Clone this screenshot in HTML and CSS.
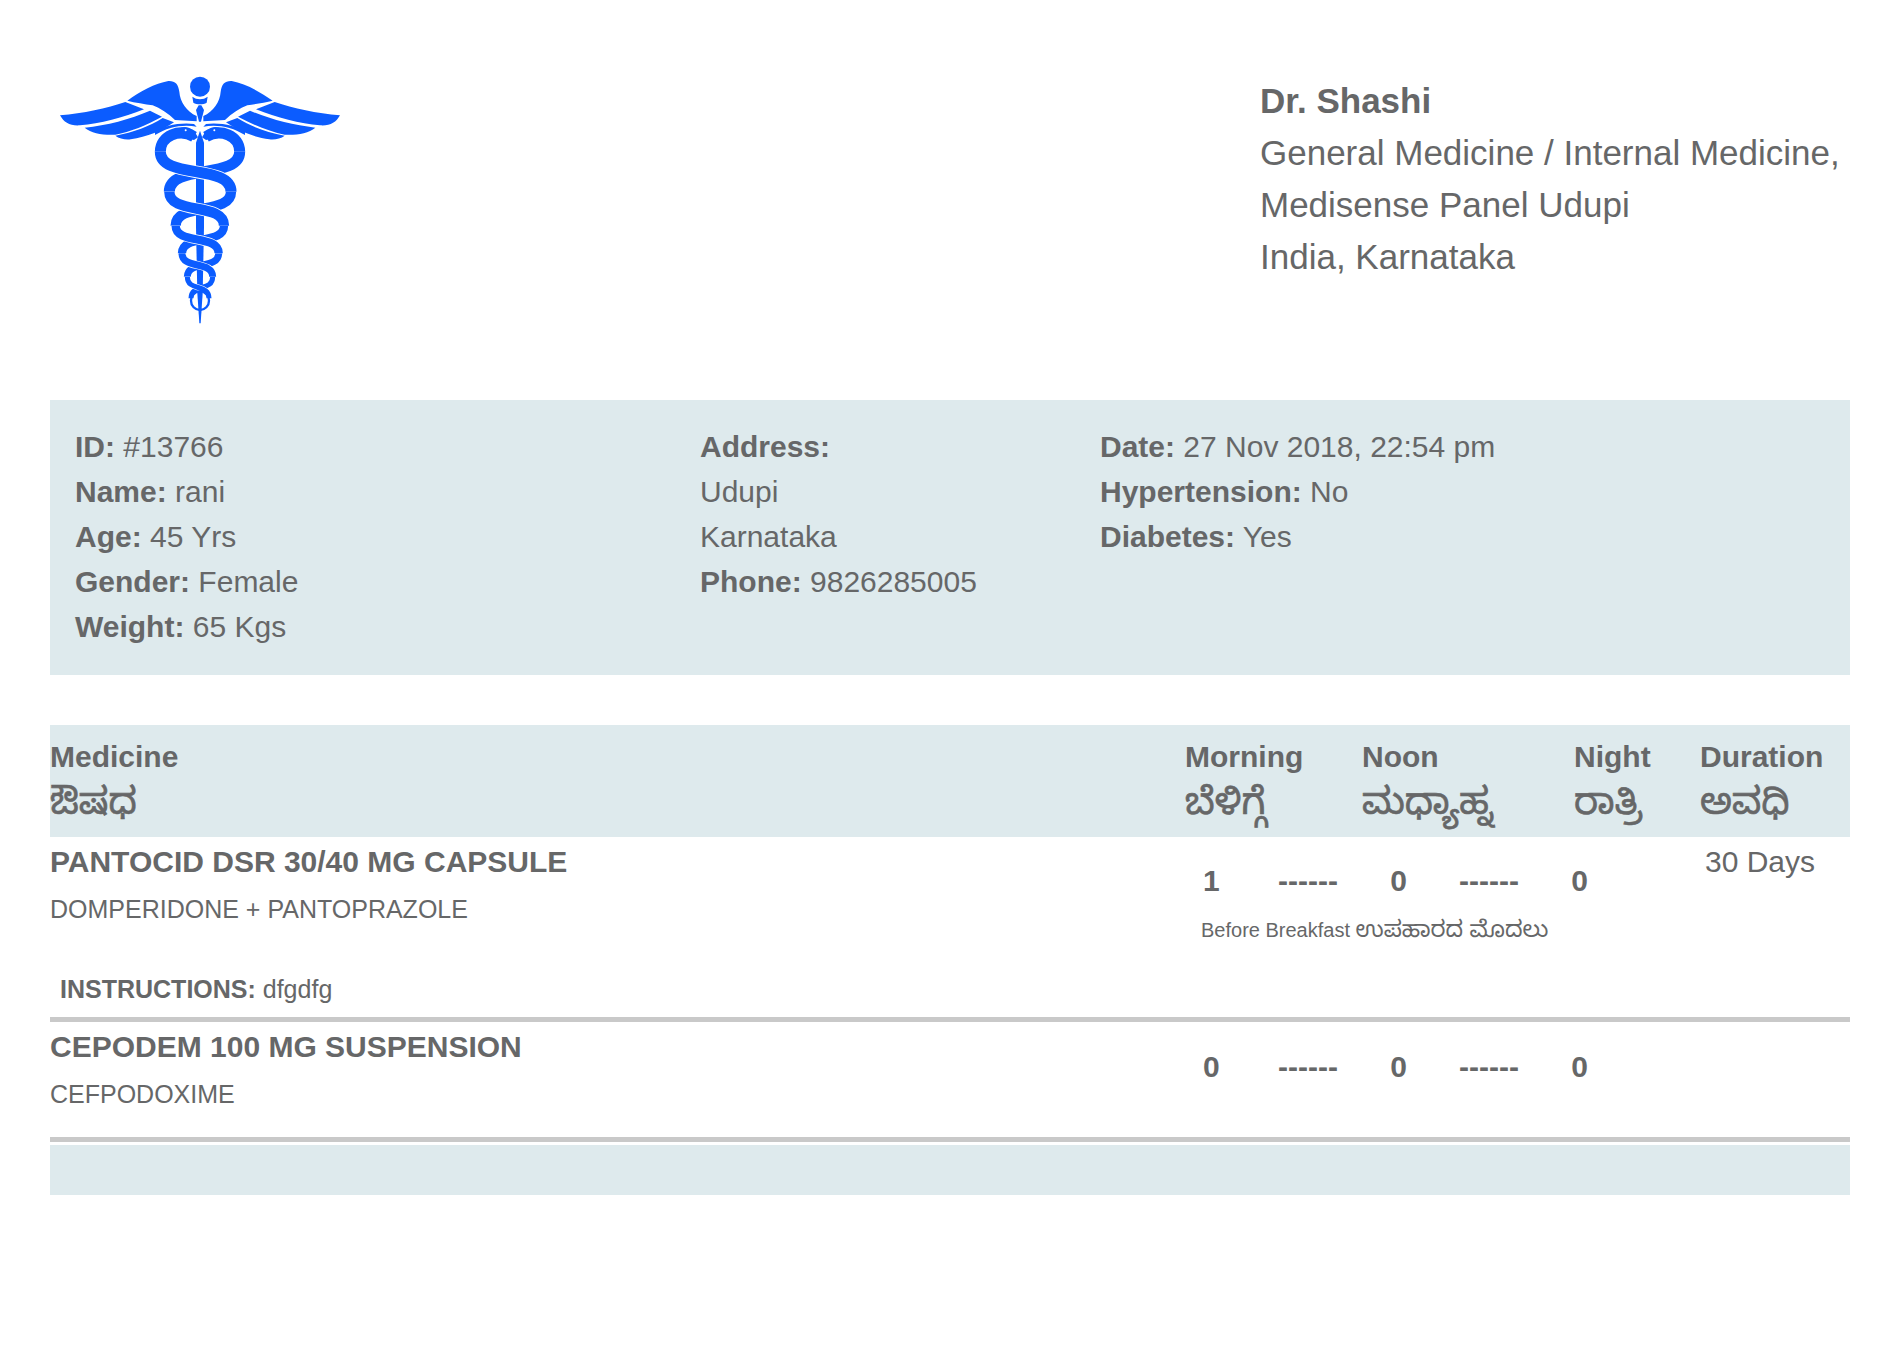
FILE: index.html
```html
<!DOCTYPE html>
<html lang="en">
<head>
<meta charset="utf-8">
<title>Prescription</title>
<link rel="stylesheet" href="styles.css">
</head>
<body>
<div class="sheet">
  <header class="top">
    <svg class="logo" viewBox="0 0 960 840" aria-hidden="true">
      <defs>
        <g id="wing">
          <path d="M60 166C130 160 200 145 256 126L312 148C250 172 180 192 120 196C90 198 72 188 60 166Z"/>
          <path d="M134 203C200 196 270 178 330 152L366 170C320 195 270 216 226 224C190 226 155 220 134 203Z"/>
          <path d="M226 227C280 218 330 198 368 174L402 187C370 210 320 232 272 238C255 240 238 236 226 227Z"/>
          <path d="M262 122C300 95 345 70 385 63C405 62 415 72 418 95C420 125 440 155 470 168V184L405 180C385 160 360 145 338 136C315 132 285 128 262 122Z"/>
          <path d="M345 215C370 198 420 186 462 192L470 200C430 192 385 200 345 225Z"/>
        </g>
      </defs>
      <g class="blue">
        <use href="#wing"/>
        <use href="#wing" transform="matrix(-1 0 0 1 960 0)"/>
        <circle cx="480" cy="80" r="30"/>
        <path d="M457 110C470 120 490 120 503 110L500 128C490 134 470 134 460 128Z"/>
        <path d="M468 150L476 136H484L492 150L483 185H477Z"/>
      </g>
      <g class="coil">
        <path class="c1" d="M599 275C599 359 388 311 388 395"/>
        <path class="c2" d="M573 395C573 466 407 426 407 497"/>
        <path class="c3" d="M552 497C552 555 426 522 426 580"/>
        <path class="c4" d="M536 580C536 629 442 601 442 650"/>
        <path class="c5" d="M518 650C518 696 453 669 453 715"/>
      </g>
      <path class="blue" d="M480 212L492 248V500L488 700L482 790H478L472 700L468 500V248Z"/>
      <g class="coil">
        <path class="case1" d="M361 275C361 359 573 311 573 395"/>
        <path class="c1" d="M361 275C361 359 573 311 573 395"/>
        <path class="case2" d="M388 395C388 466 552 426 552 497"/>
        <path class="c2" d="M388 395C388 466 552 426 552 497"/>
        <path class="case3" d="M407 497C407 555 536 522 536 580"/>
        <path class="c3" d="M407 497C407 555 536 522 536 580"/>
        <path class="case4" d="M426 580C426 629 518 601 518 650"/>
        <path class="c4" d="M426 580C426 629 518 601 518 650"/>
        <path class="case5" d="M442 650C442 696 507 669 507 715"/>
        <path class="c5" d="M442 650C442 696 507 669 507 715"/>
        <ellipse class="c6" cx="480" cy="722" rx="27" ry="28"/>
        <path class="c1" d="M361 275C361 225 420 205 462 230"/>
        <path class="c1" d="M599 275C599 225 540 205 498 230"/>
      </g>
      <g class="blue">
        <path d="M420 205C440 195 460 205 474 232L462 240L425 232Z"/>
        <path d="M540 205C520 195 500 205 486 232L498 240L535 232Z"/>
      </g>
      <circle class="eye" cx="437" cy="211" r="3"/>
      <circle class="eye" cx="523" cy="211" r="3"/>
    </svg>
    <address class="doctor">
      <strong>Dr. Shashi</strong><br>
      General Medicine / Internal Medicine,<br>
      Medisense Panel Udupi<br>
      India, Karnataka
    </address>
  </header>

  <section class="patient">
    <div class="pcol pcol-a">
      <div><b>ID:</b> #13766</div>
      <div><b>Name:</b> rani</div>
      <div><b>Age:</b> 45 Yrs</div>
      <div><b>Gender:</b> Female</div>
      <div><b>Weight:</b> 65 Kgs</div>
    </div>
    <div class="pcol pcol-b">
      <div><b>Address:</b></div>
      <div>Udupi</div>
      <div>Karnataka</div>
      <div><b>Phone:</b> 9826285005</div>
    </div>
    <div class="pcol">
      <div><b>Date:</b> 27 Nov 2018, 22:54 pm</div>
      <div><b>Hypertension:</b> No</div>
      <div><b>Diabetes:</b> Yes</div>
    </div>
  </section>

  <section class="rx">
    <div class="rx-head">
      <div>Medicine<br><span class="kn">ಔಷಧ</span></div>
      <div>Morning<br><span class="kn">ಬೆಳಿಗ್ಗೆ</span></div>
      <div>Noon<br><span class="kn">ಮಧ್ಯಾಹ್ನ</span></div>
      <div>Night<br><span class="kn">ರಾತ್ರಿ</span></div>
      <div>Duration<br><span class="kn">ಅವಧಿ</span></div>
    </div>

    <article class="rx-row rx-row-first">
      <div class="drug">
        <h3>PANTOCID DSR 30/40 MG CAPSULE</h3>
        <p>DOMPERIDONE + PANTOPRAZOLE</p>
      </div>
      <div class="dose-wrap">
        <div class="dose"><span>1</span><span>------</span><span>0</span><span>------</span><span>0</span></div>
        <p class="when">Before Breakfast <span class="kn-small">ಉಪಹಾರದ ಮೊದಲು</span></p>
      </div>
      <div class="days">30 Days</div>
      <p class="instr"><b>INSTRUCTIONS:</b> dfgdfg</p>
    </article>

    <article class="rx-row rx-row-second">
      <div class="drug">
        <h3>CEPODEM 100 MG SUSPENSION</h3>
        <p>CEFPODOXIME</p>
      </div>
      <div class="dose-wrap">
        <div class="dose"><span>0</span><span>------</span><span>0</span><span>------</span><span>0</span></div>
      </div>
      <div class="days"></div>
    </article>

    <div class="foot"></div>
  </section>
</div>
</body>
</html>
```
FILE: styles.css
```css
* { box-sizing: border-box; }
html, body { margin: 0; background: #fff; }
body {
  font-family: "Liberation Sans", "Noto Sans Kannada", "Noto Sans", sans-serif;
  color: #666768;
  font-size: 30px;
}
.sheet { width: 1800px; margin-left: 50px; }
b, strong { font-weight: 700; }

.top { display: flex; justify-content: space-between; height: 400px; }
.logo { width: 320px; height: 280px; margin: 60px 0 0 -10px; }
.blue { fill: #0b5cff; }
.coil { fill: none; stroke: #0b5cff; }
.c1 { stroke-width: 33px; }
.c2 { stroke-width: 31px; }
.c3 { stroke-width: 25px; }
.c4 { stroke-width: 21px; }
.c5 { stroke-width: 15px; }
.c6 { stroke-width: 7px; }
.case1, .case2, .case3, .case4, .case5 { stroke: #fff; }
.case1 { stroke-width: 38px; }
.case2 { stroke-width: 36px; }
.case3 { stroke-width: 29px; }
.case4 { stroke-width: 25px; }
.case5 { stroke-width: 18px; }
.eye { fill: #fff; }
.logo use { stroke: none; }

.doctor { font-style: normal; font-size: 35px; line-height: 52px; width: 590px; padding-top: 75px; white-space: nowrap; }

.patient { display: flex; height: 275px; background: #deeaed; padding: 24px 0 0 25px; line-height: 45px; font-size: 30px; }
.pcol-a { width: 625px; }
.pcol-b { width: 400px; }

.rx { margin-top: 50px; }
.rx-head {
  display: grid;
  grid-template-columns: 1135px 177px 212px 126px 150px;
  height: 112px;
  background: #deeaed;
  padding-top: 9px;
  font-weight: 700;
  font-size: 30px;
  line-height: 45px;
}
.kn { font-size: 37px; font-weight: 400; line-height: 45px; -webkit-text-stroke: 0.6px #666768; }

.rx-row {
  display: grid;
  grid-template-columns: 1135px 515px 150px;
  grid-template-rows: 1fr auto;
  border-bottom: 5px solid #c9c9c9;
}
.drug { padding-top: 5px; }
.drug h3 { margin: 0; font-size: 30px; line-height: 40px; font-weight: 700; }
.drug p { margin: 10px 0 0; font-size: 25px; line-height: 34px; }
.dose-wrap { padding-top: 24px; }
.rx-row-second .dose-wrap { padding-top: 25px; }
.dose { display: flex; font-weight: 700; font-size: 30px; line-height: 40px; width: 403px; justify-content: space-between; padding-left: 18px; }
.dose span:nth-child(2) { margin-left: 6px; }
.when { margin: 13px 0 0 16px; font-size: 20px; line-height: 30px; }
.kn-small { font-size: 23px; line-height: 30px; }
.days { padding: 5px 0 0 5px; line-height: 40px; }
.instr { grid-column: 1 / -1; margin: 0; padding: 0 0 11px 10px; font-size: 25px; line-height: 34px; }
.rx-row-first { height: 185px; }
.rx-row-second { height: 120px; }
.foot { height: 50px; margin-top: 3px; background: #deeaed; }
```
